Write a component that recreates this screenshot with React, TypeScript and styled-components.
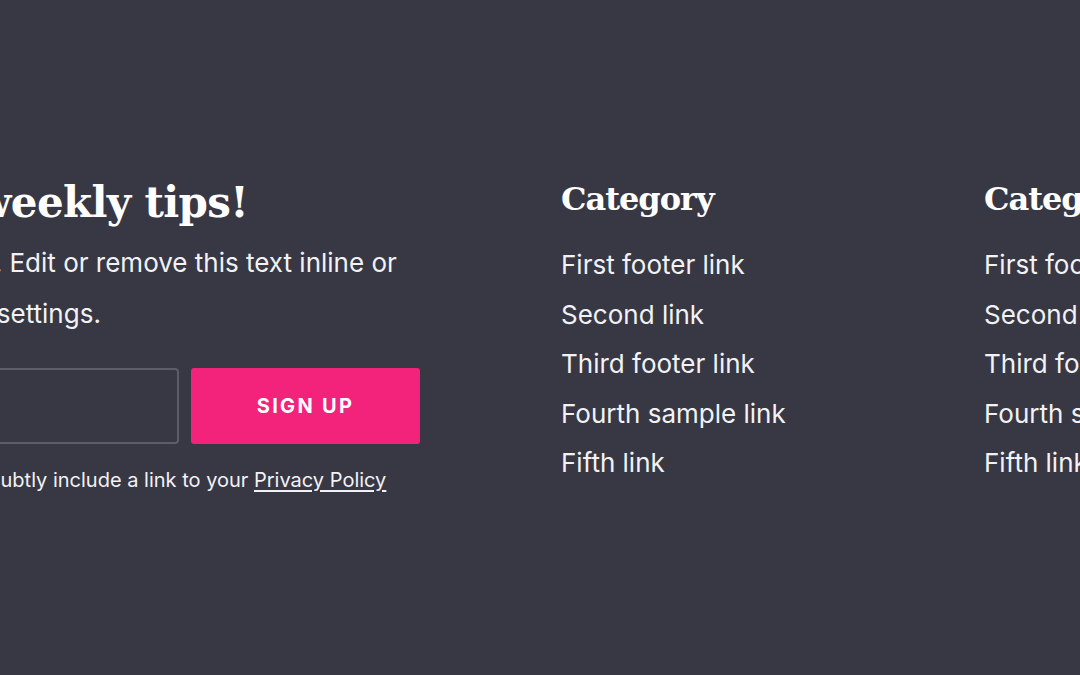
import React from "react";
import styled, { createGlobalStyle } from "styled-components";

const GlobalStyle = createGlobalStyle`
	html, body {
		margin: 0;
		padding: 0;
		background: #373844;
		overflow: hidden;
	}
	body {
		font-family: Inter, "Noto Sans", sans-serif;
		color: #f2f2f4;
	}
`;

const Footer = styled.footer`
	height: 675px;
	background: #373844;
	overflow: hidden;
`;

const Row = styled.div`
	display: flex;
	align-items: flex-start;
	gap: 141px;
	margin-left: -295px;
	padding-top: 178px;
	width: 1800px;
`;

const Newsletter = styled.div`
	flex: 0 0 715px;
	display: flex;
	flex-direction: column;
`;

const Heading = styled.h2`
	margin: 0;
	font-family: "DejaVu Serif", serif;
	font-weight: bold;
	font-size: 42px;
	line-height: 50px;
	letter-spacing: -0.65px;
	color: #ffffff;
	white-space: nowrap;
`;

const Intro = styled.p`
	margin: 9px 0 0;
	font-size: 26px;
	line-height: 51px;
	white-space: nowrap;
`;

const Form = styled.form`
	display: flex;
	gap: 12px;
	margin-top: 29px;
`;

const EmailInput = styled.input`
	flex: 1;
	height: 76px;
	box-sizing: border-box;
	background: transparent;
	border: 2px solid #5b5d68;
	border-radius: 4px;
	color: #fff;
	font-family: inherit;
	font-size: 20px;
	padding: 0 20px;
	outline: none;
`;

const SignUp = styled.button`
	flex: 0 0 229px;
	height: 76px;
	border: none;
	border-radius: 3px;
	background: #f3227b;
	color: #ffffff;
	font-family: inherit;
	font-weight: bold;
	font-size: 20px;
	letter-spacing: 2.3px;
	text-transform: uppercase;
	cursor: pointer;
`;

const Fine = styled.p`
	margin: 21px 0 0;
	font-size: 20px;
	line-height: 30px;
	white-space: nowrap;

	a {
		color: inherit;
		text-decoration: underline;
		text-underline-offset: 3px;
	}
`;

const Category = styled.div`
	flex: 0 0 282px;
	display: flex;
	flex-direction: column;
`;

const CategoryTitle = styled.h3`
	margin: 3px 0 0;
	font-family: "DejaVu Serif", serif;
	font-weight: bold;
	font-size: 32px;
	line-height: 37px;
	letter-spacing: -1px;
	color: #ffffff;
	white-space: nowrap;
`;

const Links = styled.ul`
	list-style: none;
	margin: 22px 0 0;
	padding: 0;
`;

const LinkItem = styled.li`
	font-size: 26px;
	line-height: 49.5px;
	white-space: nowrap;

	a {
		color: #f2f2f4;
		text-decoration: none;
	}
`;

const links = [
	"First footer link",
	"Second link",
	"Third footer link",
	"Fourth sample link",
	"Fifth link",
];

const categories = ["Category", "Category", "Category"];

const App = () => {
	return (
		<>
			<GlobalStyle />
			<Footer>
				<Row>
					<Newsletter>
						<Heading>Sign up for weekly tips!</Heading>
						<Intro>
							Describe the newsletter. Edit or remove this text inline or
							<br />
							in the widget's Content settings.
						</Intro>
						<Form onSubmit={(e) => e.preventDefault()}>
							<EmailInput type="email" aria-label="Email" />
							<SignUp type="submit">Sign up</SignUp>
						</Form>
						<Fine>
							We never spam you. You may subtly include a link to your{" "}
							<a href="#">Privacy Policy</a>
						</Fine>
					</Newsletter>
					{categories.map((title, i) => (
						<Category key={i}>
							<CategoryTitle>{title}</CategoryTitle>
							<Links>
								{links.map((l) => (
									<LinkItem key={l}>
										<a href="#">{l}</a>
									</LinkItem>
								))}
							</Links>
						</Category>
					))}
				</Row>
			</Footer>
		</>
	);
};

export default App;
